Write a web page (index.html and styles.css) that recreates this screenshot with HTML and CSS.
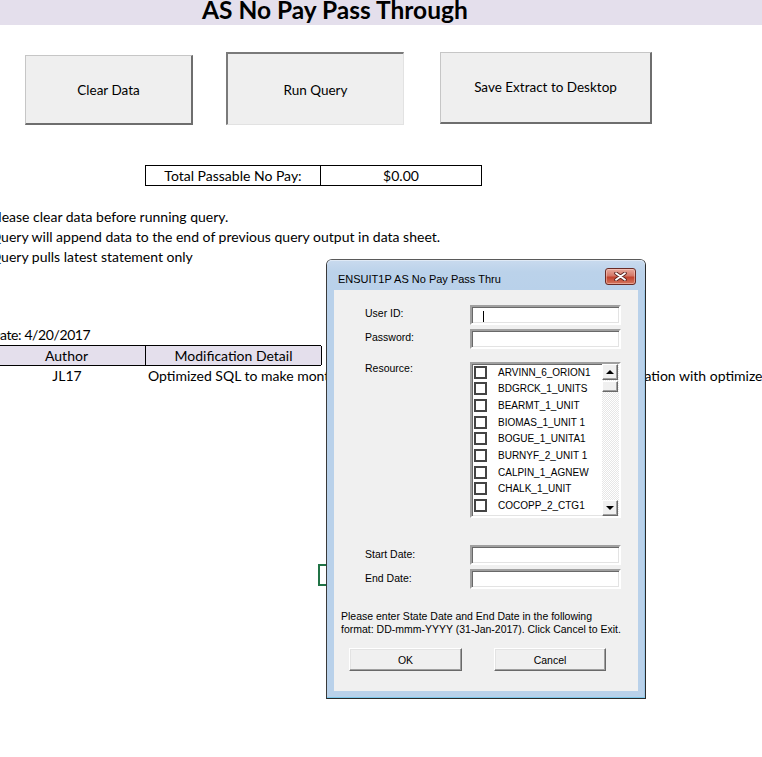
FILE: index.html
```html
<!DOCTYPE html>
<html>
<head>
<meta charset="utf-8">
<link rel="stylesheet" href="styles.css">
</head>
<body>
<div class="page">
  <header class="title-band"><h1 class="title">AS No Pay Pass Through</h1></header>

  <div class="btn-row">
    <div class="xl-btn btn-clear">Clear Data</div>
    <div class="xl-btn btn-run">Run Query</div>
    <div class="xl-btn btn-save">Save Extract to Desktop</div>
  </div>

  <div class="sheet">
    <div class="total">
      <div class="total-label">Total Passable No Pay:</div>
      <div class="total-value">$0.00</div>
    </div>
    <div class="notes">
      <div class="note">Please clear data before running query.</div>
      <div class="note">Query will append data to the end of previous query output in data sheet.</div>
      <div class="note">Query pulls latest statement only</div>
    </div>
    <div class="update">Date: 4/20/2017</div>
    <div class="log-head">
      <div class="col-a">Author</div>
      <div class="col-b">Modification Detail</div>
    </div>
    <div class="log-row">
      <div class="col-a">JL17</div>
      <div class="col-b spill">Optimized SQL to make monthly query run faster and updated the revenue calculation with optimized logic for all resources</div>
    </div>
  </div>

  <div class="cell-select"></div>

  <div class="dialog">
    <div class="dlg-titlebar">
      <span class="dlg-title">ENSUIT1P AS No Pay Pass Thru</span>
      <div class="dlg-close">
        <svg width="13" height="9" viewBox="0 0 13 9">
          <path d="M2 1.2 L11 7.8 M11 1.2 L2 7.8" stroke="#5a2520" stroke-width="3.6" stroke-linecap="round" fill="none"/>
          <path d="M2 1.2 L11 7.8 M11 1.2 L2 7.8" stroke="#ffffff" stroke-width="1.8" stroke-linecap="round" fill="none"/>
        </svg>
      </div>
    </div>
    <div class="dlg-client">
      <div class="form-row row-user">
        <span class="dlg-label">User ID:</span>
        <div class="field sunken"><span class="caret"></span></div>
      </div>
      <div class="form-row row-pass">
        <span class="dlg-label">Password:</span>
        <div class="field sunken"></div>
      </div>
      <div class="form-row row-res">
        <span class="dlg-label label-top">Resource:</span>
        <div class="listbox sunken">
          <div class="list-items">
            <div class="list-item"><span class="chk"></span><span>ARVINN_6_ORION1</span></div>
            <div class="list-item"><span class="chk"></span><span>BDGRCK_1_UNITS</span></div>
            <div class="list-item"><span class="chk"></span><span>BEARMT_1_UNIT</span></div>
            <div class="list-item"><span class="chk"></span><span>BIOMAS_1_UNIT 1</span></div>
            <div class="list-item"><span class="chk"></span><span>BOGUE_1_UNITA1</span></div>
            <div class="list-item"><span class="chk"></span><span>BURNYF_2_UNIT 1</span></div>
            <div class="list-item"><span class="chk"></span><span>CALPIN_1_AGNEW</span></div>
            <div class="list-item"><span class="chk"></span><span>CHALK_1_UNIT</span></div>
            <div class="list-item"><span class="chk"></span><span>COCOPP_2_CTG1</span></div>
          </div>
          <div class="vscroll">
            <div class="sb-btn"><span class="arrow-up"></span></div>
            <div class="sb-thumb"></div>
            <div class="sb-track"></div>
            <div class="sb-btn"><span class="arrow-down"></span></div>
          </div>
        </div>
      </div>
      <div class="form-row row-start">
        <span class="dlg-label">Start Date:</span>
        <div class="field sunken"></div>
      </div>
      <div class="form-row row-end">
        <span class="dlg-label">End Date:</span>
        <div class="field sunken"></div>
      </div>
      <p class="dlg-note">Please enter State Date and End Date in the following<br>format: DD-mmm-YYYY (31-Jan-2017). Click Cancel to Exit.</p>
      <div class="dlg-buttons">
        <div class="dlg-btn btn-ok">OK</div>
        <div class="dlg-btn btn-cancel">Cancel</div>
      </div>
    </div>
  </div>
</div>
</body>
</html>
```

FILE: styles.css
```css
html, body {
  margin: 0;
  padding: 0;
  background: #ffffff;
  overflow: hidden;
}
body {
  width: 762px;
  height: 757px;
  font-family: Lato, "Liberation Sans", sans-serif;
  color: #000;
}
.page {
  position: relative;
  width: 762px;
  height: 757px;
  overflow: hidden;
}

/* ---------- title ---------- */
.title-band {
  height: 25px;
  background: #e4dfec;
  padding-left: 202px;
  box-sizing: border-box;
}
.title {
  margin: 0;
  font-size: 24.5px;
  font-weight: 700;
  line-height: 20px;
  white-space: nowrap;
}

/* ---------- sheet buttons ---------- */
.btn-row {
  display: flex;
  align-items: flex-start;
  padding-left: 25px;
  margin-top: 27px;
}
.xl-btn {
  box-sizing: border-box;
  background: #efefef;
  display: flex;
  align-items: center;
  justify-content: center;
  font-size: 13.5px;
  white-space: nowrap;
  flex: none;
}
.btn-clear {
  width: 168px;
  height: 70px;
  margin-top: 3px;
  border-top: 1px solid #c6c6c6;
  border-left: 1px solid #c6c6c6;
  border-right: 2px solid #6e6e6e;
  border-bottom: 2px solid #6e6e6e;
}
.btn-run {
  width: 178px;
  height: 73px;
  margin-left: 33px;
  border-top: 2px solid #7a7a7a;
  border-left: 2px solid #7a7a7a;
  border-right: 1px solid #e2e2e2;
  border-bottom: 1px solid #e2e2e2;
  padding-top: 2px;
}
.btn-save {
  width: 212px;
  height: 72px;
  margin-left: 36px;
  border-top: 1px solid #c6c6c6;
  border-left: 1px solid #c6c6c6;
  border-right: 2px solid #6e6e6e;
  border-bottom: 2px solid #6e6e6e;
  padding-bottom: 2px;
}

/* ---------- sheet cells ---------- */
.sheet {
  margin-left: -12px;
  font-size: 14px;
  white-space: nowrap;
}
.total {
  margin-top: 40px;
  margin-left: 157px;
  width: 337px;
  height: 21px;
  box-sizing: border-box;
  border: 1px solid #000;
  display: flex;
  line-height: 19px;
}
.total-label {
  width: 174px;
  border-right: 1px solid #000;
  text-align: center;
}
.total-value {
  flex: 1;
  text-align: center;
}
.notes {
  margin-top: 21px;
}
.note {
  height: 20px;
  line-height: 20px;
  padding-left: 2px;
}
.update {
  margin-top: 58px;
  height: 20px;
  line-height: 20px;
  padding-left: 2px;
  letter-spacing: -0.4px;
}
.log-head {
  display: flex;
  height: 21px;
  box-sizing: border-box;
  border-top: 1px solid #000;
  border-bottom: 1px solid #000;
  width: 333px;
  background: #e4dfec;
  line-height: 19px;
}
.log-head .col-a {
  width: 157px;
  flex: none;
  text-align: center;
  border-right: 1px solid #000;
}
.log-head .col-b {
  width: 175px;
  flex: none;
  text-align: center;
  border-right: 1px solid #000;
}
.log-row {
  display: flex;
  height: 20px;
  line-height: 20px;
}
.log-row .col-a {
  width: 158px;
  flex: none;
  text-align: center;
}
.log-row .col-b {
  flex: none;
  padding-left: 2px;
}

.cell-select {
  position: absolute;
  left: 318px;
  top: 564px;
  width: 40px;
  height: 22px;
  box-sizing: border-box;
  border: 2px solid #217346;
}

/* ---------- dialog ---------- */
.dialog {
  position: absolute;
  left: 326px;
  top: 259px;
  width: 320px;
  height: 440px;
  box-sizing: border-box;
  border: 1px solid #2a2a2a;
  border-top-color: #5a5a5a;
  border-left-color: #3a3a3a;
  border-radius: 6px 6px 0 0;
  background: #b9d1ea;
  box-shadow: inset 0 -1px 0 #7cc7ea, inset -1px 0 0 #9cc6e6;
  font-family: "Liberation Sans", Arial, sans-serif;
  font-size: 10.5px;
  display: flex;
  flex-direction: column;
}
.dlg-titlebar {
  height: 30px;
  flex: none;
  display: flex;
  align-items: center;
  padding: 0 9px 0 11px;
  border-radius: 5px 5px 0 0;
  background: linear-gradient(#c9daee, #bbd2ea 40%, #b9d1ea);
  box-shadow: inset 0 1px 0 #dfe9f5;
}
.dlg-title {
  flex: 1;
  font-size: 11px;
  color: #000;
  padding-top: 8px;
}
.dlg-close {
  width: 31px;
  height: 17px;
  box-sizing: border-box;
  margin-top: 3px;
  border: 1px solid #6a2b25;
  border-radius: 3px;
  background: linear-gradient(#e8a99c 0%, #d47868 45%, #c2432e 55%, #d4765e 100%);
  box-shadow: inset 0 0 0 1px rgba(255,220,210,0.45);
  display: flex;
  align-items: center;
  justify-content: center;
}
.dlg-close svg {
  display: block;
}
.dlg-client {
  margin: 0 7px;
  height: 401px;
  flex: none;
  background: #f0f0f0;
  box-sizing: border-box;
  padding-top: 15px;
}
.form-row {
  display: flex;
  align-items: center;
}
.dlg-label {
  width: 105px;
  margin-left: 31px;
  flex: none;
  color: #000;
  padding-bottom: 5px;
}
.row-start .dlg-label,
.row-end .dlg-label {
  padding-bottom: 3px;
}
.label-top {
  align-self: flex-start;
  padding-top: 0;
  padding-bottom: 0;
}
.field {
  width: 151px;
  height: 20px;
  background: #fff;
  position: relative;
  flex: none;
}
.sunken {
  box-sizing: border-box;
  border: 2px solid;
  border-color: #a0a0a0 #ffffff #ffffff #a0a0a0;
  box-shadow: inset 1px 1px 0 #696969, inset -1px -1px 0 #e3e3e3;
}
.caret {
  position: absolute;
  left: 11px;
  top: 4px;
  width: 1px;
  height: 11px;
  background: #000;
}
.row-pass { margin-top: 4px; }
.row-res { margin-top: 13px; align-items: flex-start; }
.row-start { margin-top: 27px; }
.row-end { margin-top: 4px; }

.listbox {
  width: 151px;
  height: 156px;
  background: #fff;
  display: flex;
  flex: none;
}
.list-items {
  flex: 1;
  padding-left: 2px;
}
.list-item {
  height: 16.67px;
  display: flex;
  align-items: center;
  font-size: 10px;
  white-space: nowrap;
}
.chk {
  width: 13px;
  height: 13px;
  box-sizing: border-box;
  border: 2px solid #444;
  background: #fff;
  margin-right: 11px;
  flex: none;
}
.vscroll {
  width: 17px;
  display: flex;
  flex-direction: column;
  padding: 0 1px 0 0;
  box-sizing: border-box;
  background-color: #f3f3f3;
  background-image: repeating-conic-gradient(#e6e6e6 0 25%, #ffffff 0 50%);
  background-size: 2px 2px;
}
.sb-btn, .sb-thumb {
  box-sizing: border-box;
  background: #f0f0f0;
  border: 1px solid;
  border-color: #ffffff #696969 #696969 #ffffff;
  box-shadow: inset -1px -1px 0 #a0a0a0;
}
.sb-btn {
  height: 16px;
  display: flex;
  align-items: center;
  justify-content: center;
}
.sb-thumb {
  height: 11px;
  margin-top: 1px;
}
.sb-track {
  flex: 1;
}
.arrow-up {
  width: 0;
  height: 0;
  border-left: 4px solid transparent;
  border-right: 4px solid transparent;
  border-bottom: 4px solid #000;
}
.arrow-down {
  width: 0;
  height: 0;
  border-left: 4px solid transparent;
  border-right: 4px solid transparent;
  border-top: 4px solid #000;
}

.dlg-note {
  margin: 21px 0 0 7px;
  line-height: 13px;
  font-size: 10.5px;
  white-space: nowrap;
}
.dlg-buttons {
  display: flex;
  margin-top: 12px;
}
.dlg-btn {
  height: 23px;
  box-sizing: border-box;
  background: #f0f0f0;
  border: 1px solid;
  border-color: #ffffff #696969 #696969 #ffffff;
  box-shadow: inset -1px -1px 0 #a0a0a0, inset 1px 1px 0 #e3e3e3;
  display: flex;
  align-items: center;
  justify-content: center;
  font-size: 10.5px;
}
.btn-ok {
  width: 113px;
  margin-left: 15px;
}
.btn-cancel {
  width: 112px;
  margin-left: 32px;
}
```
